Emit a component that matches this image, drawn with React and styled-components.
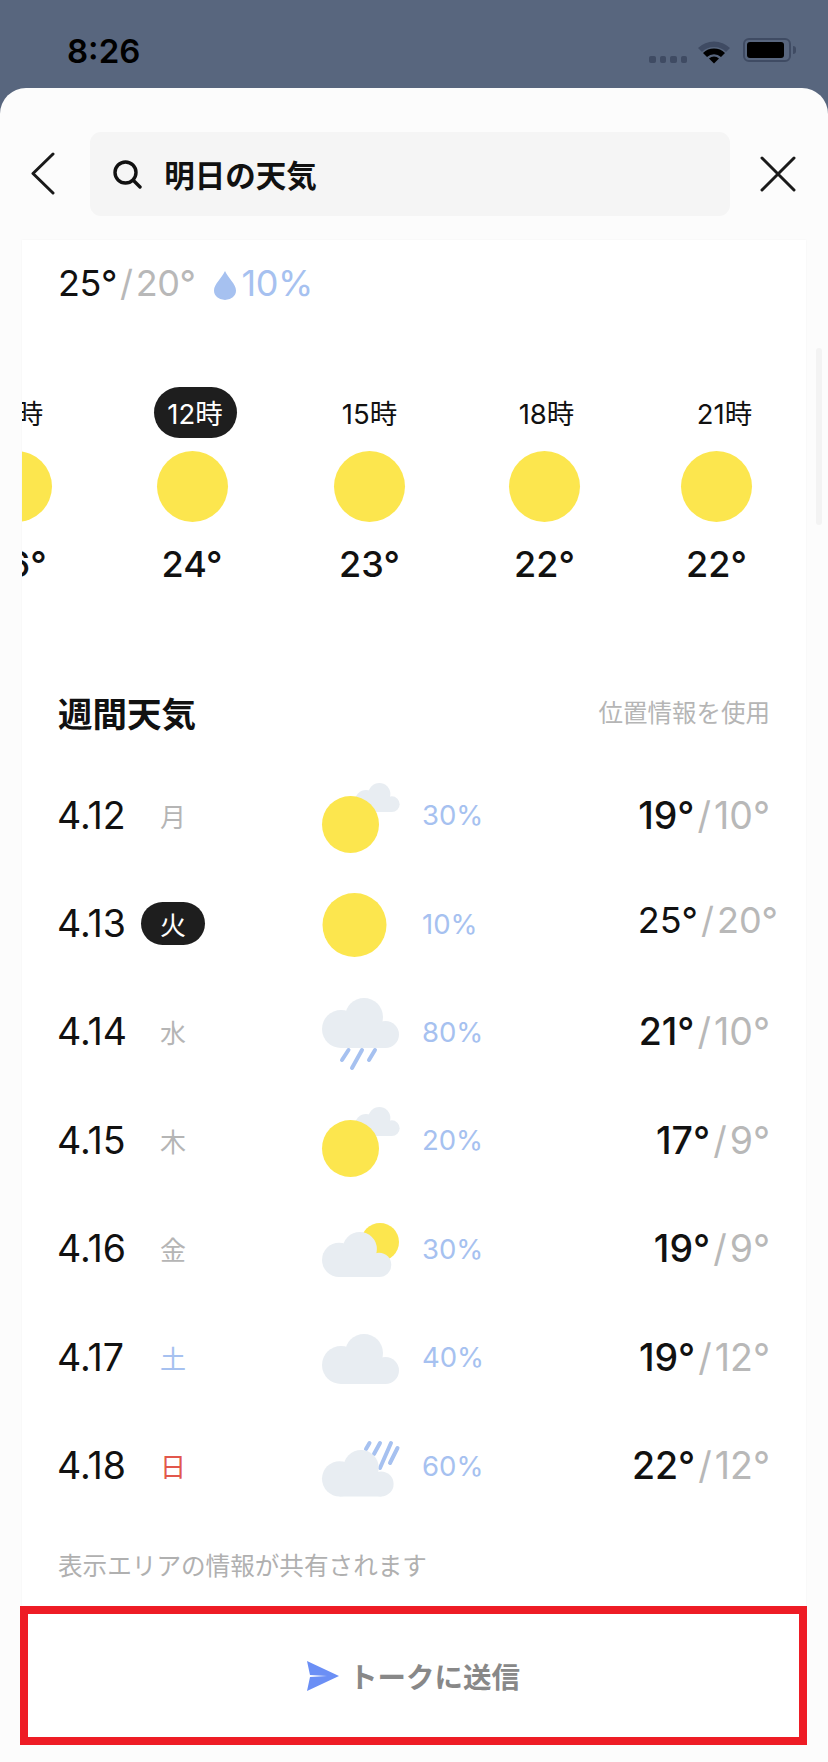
import React from 'react';
import styled, { createGlobalStyle } from 'styled-components';

const HOURS = [
  { time: '9時', temp: '26°', width: 174, shift: 5 },
  { time: '12時', temp: '24°', width: 178, shift: 3, active: true },
  { time: '15時', temp: '23°', width: 177, shift: 0 },
  { time: '18時', temp: '22°', width: 173, shift: 2 },
  { time: '21時', temp: '22°', width: 171, shift: 8 },
];

const WEEK = [
  { date: '4.12', day: '月', icon: 'sunCloud', pct: '30%', high: '19°', low: '10°' },
  { date: '4.13', day: '火', icon: 'sun', pct: '10%', high: '25°', low: '20°', today: true },
  { date: '4.14', day: '水', icon: 'rain', pct: '80%', high: '21°', low: '10°' },
  { date: '4.15', day: '木', icon: 'sunCloud2', pct: '20%', high: '17°', low: '9°' },
  { date: '4.16', day: '金', icon: 'cloudSun', pct: '30%', high: '19°', low: '9°' },
  { date: '4.17', day: '土', icon: 'cloud', pct: '40%', high: '19°', low: '12°', tone: '#a6c1f0' },
  { date: '4.18', day: '日', icon: 'lateRain', pct: '60%', high: '22°', low: '12°', tone: '#e2574c' },
];

const SUN = '#fce64e';
const CLOUD = '#e8edf2';
const RAIN = '#a6c1f0';

const Cloud = ({ x = 0, y = 0, scale = 1 }) => (
  <g transform={`translate(${x} ${y}) scale(${scale})`} fill={CLOUD}>
    <circle cx="19" cy="31" r="19" />
    <circle cx="42" cy="19" r="19" />
    <circle cx="63.5" cy="36.5" r="13.5" />
    <rect x="19" y="28" width="45" height="22" />
  </g>
);

const Drops = ({ lines }) => (
  <g stroke={RAIN} strokeWidth="4" strokeLinecap="round">
    {lines.map((l, i) => (
      <line key={i} x1={l[0]} y1={l[1]} x2={l[2]} y2={l[3]} />
    ))}
  </g>
);

const ICONS = {
  sunCloud: (
    <>
      <Cloud x={33} y={6} scale={0.58} />
      <circle cx="28.5" cy="47.5" r="28.5" fill={SUN} />
    </>
  ),
  sunCloud2: (
    <>
      <Cloud x={33} y={5} scale={0.58} />
      <circle cx="28.5" cy="46.5" r="28.5" fill={SUN} />
    </>
  ),
  sun: <circle cx="32.5" cy="40" r="32" fill={SUN} />,
  rain: (
    <>
      <Drops lines={[[26.5, 57, 20, 67], [40, 57, 30, 75], [53, 57, 47, 67]]} />
      <Cloud y={5} />
    </>
  ),
  cloudSun: (
    <>
      <circle cx="58" cy="32" r="19" fill={SUN} />
      <Cloud y={22} scale={0.9} />
    </>
  ),
  cloud: <Cloud y={15} />,
  lateRain: (
    <>
      <Drops lines={[[47.5, 16, 44, 22], [58, 16, 52, 27], [69, 16, 58, 41], [75.5, 21, 68, 36]]} />
      <Cloud y={23} scale={0.93} />
    </>
  ),
};

export default function App() {
  return (
    <Screen>
      <GlobalStyle />
      <StatusBar>
        <Clock>8:26</Clock>
        <StatusIcons>
          <Signal>
            <i /><i /><i /><i />
          </Signal>
          <svg width="34" height="26" viewBox="0 0 34 26">
            <path d="M1 10 A23 23 0 0 1 33 10 L29 14 A17 17 0 0 0 5 14 Z" fill="#3f4b63" />
            <path d="M6 15 A16 16 0 0 1 28 15 L24 19 A10 10 0 0 0 10 19 Z" fill="#000" />
            <path d="M12 20.5 A7.5 7.5 0 0 1 22 20.5 L17 25.5 Z" fill="#000" />
          </svg>
          <Battery>
            <BatteryFill />
          </Battery>
          <BatteryNub />
        </StatusIcons>
      </StatusBar>

      <Sheet>
        <Scrollbar />
        <Header>
          <IconButton>
            <svg width="26" height="44" viewBox="0 0 26 44" fill="none" stroke="#1a1a1a" strokeWidth="3" strokeLinecap="round" strokeLinejoin="round">
              <path d="M23 2 L3 21.5 L23 41" />
            </svg>
          </IconButton>
          <SearchBox>
            <svg width="30" height="30" viewBox="0 0 30 30" fill="none" stroke="#111" strokeWidth="3.4" strokeLinecap="round">
              <circle cx="13.5" cy="13.5" r="10.5" />
              <path d="M21.5 21.5 L28 28" />
            </svg>
            <SearchText>明日の天気</SearchText>
          </SearchBox>
          <CloseButton>
            <svg width="36" height="36" viewBox="0 0 36 36" fill="none" stroke="#1a1a1a" strokeWidth="3" strokeLinecap="round">
              <path d="M2 2 L34 34 M34 2 L2 34" />
            </svg>
          </CloseButton>
        </Header>

        <Card>
          <Summary>
            <span>25°</span>
            <Slash>/</Slash>
            <Low>20°</Low>
            <svg width="22" height="29" viewBox="0 0 22 29">
              <path d="M11 0 C14 7 22 13 22 19.5 A11 9.5 0 0 1 0 19.5 C0 13 8 7 11 0 Z" fill={RAIN} />
            </svg>
            <SummaryPct>10%</SummaryPct>
          </Summary>

          <HourRow>
            {HOURS.map(h => (
              <HourCol key={h.time} $width={h.width}>
                <HourLabel $active={h.active} $shift={h.shift}>{h.time}</HourLabel>
                <HourSun />
                <HourTemp>{h.temp}</HourTemp>
              </HourCol>
            ))}
          </HourRow>

          <WeekHead>
            <WeekTitle>週間天気</WeekTitle>
            <WeekLink>位置情報を使用</WeekLink>
          </WeekHead>

          {WEEK.map(d => (
            <DayRow key={d.date}>
              <DayDate>{d.date}</DayDate>
              <DayName $today={d.today} $tone={d.tone}>{d.day}</DayName>
              <DayIcon viewBox="0 0 78 80" width="78" height="80">{ICONS[d.icon]}</DayIcon>
              <DayPct>{d.pct}</DayPct>
              <DayTemp $today={d.today}>
                <High $today={d.today}>{d.high}</High>
                <Slash>/</Slash>
                <Low>{d.low}</Low>
              </DayTemp>
            </DayRow>
          ))}

          <Note>表示エリアの情報が共有されます</Note>
        </Card>

        <SendBox>
          <svg width="32" height="30" viewBox="0 0 32 30">
            <path d="M0 0 L32 15 L0 30 L3 16 L20 15 L3 14 Z" fill="#6b8ff5" />
          </svg>
          <SendText>トークに送信</SendText>
        </SendBox>
      </Sheet>
    </Screen>
  );
}

const GlobalStyle = createGlobalStyle`
  html, body {
    margin: 0;
    padding: 0;
    background: #58667e;
  }
  * {
    box-sizing: border-box;
  }
`;

const Screen = styled.div`
  width: 828px;
  height: 1762px;
  overflow: hidden;
  background: #58667e;
  font-family: Inter, "Noto Sans CJK JP", sans-serif;
  color: #111;
`;

const StatusBar = styled.div`
  height: 88px;
  display: flex;
  justify-content: space-between;
  padding: 36px 32px 0 67px;
`;

const Clock = styled.div`
  font-size: 33px;
  line-height: 30px;
  font-weight: 600;
  color: #000;
`;

const StatusIcons = styled.div`
  display: flex;
  align-items: flex-start;
  padding-top: 2px;
  height: 30px;
  svg {
    margin: 0 12px 0 10px;
  }
`;

const Signal = styled.div`
  display: flex;
  gap: 4px;
  margin-top: 18px;
  i {
    width: 6.5px;
    height: 6.5px;
    border-radius: 2px;
    background: #3f4b63;
  }
`;

const Battery = styled.div`
  width: 48px;
  height: 24px;
  border: 2px solid #3f4b63;
  border-radius: 6px;
  padding: 2px;
`;

const BatteryFill = styled.div`
  width: 37px;
  height: 16px;
  border-radius: 3px;
  background: #000;
`;

const BatteryNub = styled.div`
  width: 3px;
  height: 8px;
  margin: 8px 0 0 2px;
  border-radius: 0 3px 3px 0;
  background: #3f4b63;
`;

const Sheet = styled.div`
  position: relative;
  height: 1674px;
  background: #fcfcfc;
  border-radius: 26px 26px 0 0;
  display: flex;
  flex-direction: column;
`;

const Scrollbar = styled.div`
  position: absolute;
  top: 260px;
  right: 6px;
  width: 6px;
  height: 177px;
  border-radius: 3px;
  background: #f3f3f3;
`;

const Header = styled.div`
  height: 152px;
  flex: none;
  padding: 44px 32px 24px 0;
  display: flex;
  align-items: center;
`;

const IconButton = styled.div`
  width: 90.5px;
  padding-left: 30px;
  display: flex;
  align-items: center;
`;

const SearchBox = styled.div`
  width: 642px;
  height: 84px;
  background: #f5f5f5;
  border-radius: 11px;
  display: flex;
  align-items: center;
  gap: 22px;
  padding-left: 22px;
`;

const SearchText = styled.div`
  font-size: 30.5px;
  font-weight: 700;
  color: #111;
`;

const CloseButton = styled.div`
  margin-left: 30px;
  display: flex;
  align-items: center;
`;

const Card = styled.div`
  height: 1366px;
  flex: none;
  margin: 0 22px;
  background: #fff;
  box-shadow: 0 0 2px rgba(0, 0, 0, 0.04);
  overflow: hidden;
`;

const Summary = styled.div`
  display: flex;
  align-items: center;
  height: 44px;
  margin: 21px 0 0 36px;
  font-size: 36px;
  letter-spacing: -0.4px;
  color: #111;
  svg {
    margin: 4px 6px 0 18px;
  }
`;

const Slash = styled.span`
  color: #b8b8b8;
  font-weight: 400;
  margin: 0 3px;
`;

const Low = styled.span`
  color: #b8b8b8;
  font-weight: 400;
`;

const SummaryPct = styled.span`
  color: ${RAIN};
`;

const HourRow = styled.div`
  display: flex;
  margin: 82px 0 0 -93px;
`;

const HourCol = styled.div`
  flex: none;
  width: ${props => props.$width}px;
  display: flex;
  flex-direction: column;
  align-items: center;
`;

const HourLabel = styled.div`
  height: 51px;
  width: 83px;
  border-radius: 26px;
  display: flex;
  align-items: center;
  justify-content: center;
  font-size: 27.5px;
  padding-bottom: 1px;
  transform: translateX(${props => props.$shift}px);
  background: ${props => props.$active ? '#1e1e1e' : 'transparent'};
  color: ${props => props.$active ? '#fff' : '#111'};
`;

const HourSun = styled.div`
  width: 71px;
  height: 71px;
  margin-top: 13px;
  border-radius: 50%;
  background: ${SUN};
`;

const HourTemp = styled.div`
  margin-top: 20px;
  font-size: 36px;
  line-height: 44px;
  font-weight: 500;
  color: #111;
`;

const WeekHead = styled.div`
  display: flex;
  align-items: center;
  justify-content: space-between;
  margin: 100.5px 0 24.5px;
  padding: 0 36px;
  height: 50px;
`;

const WeekTitle = styled.div`
  font-size: 34.5px;
  font-weight: 700;
  color: #111;
`;

const WeekLink = styled.div`
  font-size: 24.5px;
  color: #b5b5b5;
`;

const DayRow = styled.div`
  display: flex;
  align-items: center;
  height: 108.4px;
  padding: 0 36px;
`;

const DayDate = styled.div`
  width: 84px;
  font-size: 37.5px;
  margin-left: -1px;
  color: #111;
`;

const DayName = styled.div`
  width: 64px;
  height: 43px;
  border-radius: 22px;
  display: flex;
  align-items: center;
  justify-content: center;
  font-size: 26px;
  background: ${props => props.$today ? '#1e1e1e' : 'transparent'};
  color: ${props => props.$today ? '#fff' : props.$tone || '#b5b5b5'};
`;

const DayIcon = styled.svg`
  flex: none;
  margin: 3px 0 0 117px;
  overflow: visible;
`;

const DayPct = styled.div`
  margin-left: 22px;
  font-size: 27.5px;
  color: ${RAIN};
`;

const DayTemp = styled.div`
  margin-left: auto;
  font-size: ${props => props.$today ? '36px' : '37.5px'};
  margin-right: ${props => props.$today ? '-8px' : '0'};
  margin-bottom: ${props => props.$today ? '7px' : '0'};
`;

const High = styled.span`
  font-weight: ${props => props.$today ? 400 : 500};
  color: #111;
`;

const Note = styled.div`
  margin: 26px 0 0 36px;
  font-size: 24.6px;
  color: #b0b0b0;
`;

const SendBox = styled.div`
  flex: none;
  width: 787px;
  height: 139px;
  margin-left: 20px;
  border: solid #ee1c25;
  border-width: 8px;
  background: #fff;
  display: flex;
  align-items: center;
  justify-content: center;
  gap: 10px;
`;

const SendText = styled.div`
  font-size: 28.5px;
  font-weight: 700;
  color: #888;
`;
